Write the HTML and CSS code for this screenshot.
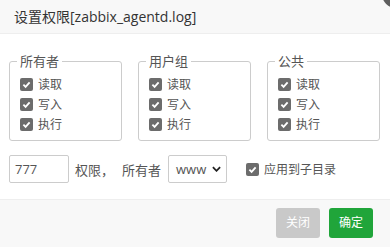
FILE: index.html
```html
<!DOCTYPE html>
<html lang="zh">
<head>
<meta charset="utf-8">
<title>设置权限</title>
<link rel="stylesheet" href="styles.css">
</head>
<body>
<div class="dialog">
  <div class="hd">设置权限[zabbix_agentd.log]</div>
  <span class="close"></span>
  <div class="bd">
    <div class="groups">
      <fieldset class="grp">
        <legend>所有者</legend>
        <label class="row"><span class="cb"><svg viewBox="0 0 12 12"><path d="M2.6 6.2 L5 8.6 L9.4 3.6" /></svg></span>读取</label>
        <label class="row"><span class="cb"><svg viewBox="0 0 12 12"><path d="M2.6 6.2 L5 8.6 L9.4 3.6" /></svg></span>写入</label>
        <label class="row"><span class="cb"><svg viewBox="0 0 12 12"><path d="M2.6 6.2 L5 8.6 L9.4 3.6" /></svg></span>执行</label>
      </fieldset>
      <fieldset class="grp">
        <legend>用户组</legend>
        <label class="row"><span class="cb"><svg viewBox="0 0 12 12"><path d="M2.6 6.2 L5 8.6 L9.4 3.6" /></svg></span>读取</label>
        <label class="row"><span class="cb"><svg viewBox="0 0 12 12"><path d="M2.6 6.2 L5 8.6 L9.4 3.6" /></svg></span>写入</label>
        <label class="row"><span class="cb"><svg viewBox="0 0 12 12"><path d="M2.6 6.2 L5 8.6 L9.4 3.6" /></svg></span>执行</label>
      </fieldset>
      <fieldset class="grp">
        <legend>公共</legend>
        <label class="row"><span class="cb"><svg viewBox="0 0 12 12"><path d="M2.6 6.2 L5 8.6 L9.4 3.6" /></svg></span>读取</label>
        <label class="row"><span class="cb"><svg viewBox="0 0 12 12"><path d="M2.6 6.2 L5 8.6 L9.4 3.6" /></svg></span>写入</label>
        <label class="row"><span class="cb"><svg viewBox="0 0 12 12"><path d="M2.6 6.2 L5 8.6 L9.4 3.6" /></svg></span>执行</label>
      </fieldset>
    </div>
    <div class="opts">
      <div class="inp">777</div>
      <span class="txt t1">权限，</span>
      <span class="txt t2">所有者</span>
      <div class="sel"><span>www</span><svg class="chev" viewBox="0 0 10 6"><path d="M1 1 L5 5 L9 1" /></svg></div>
      <label class="row sub"><span class="cb"><svg viewBox="0 0 12 12"><path d="M2.6 6.2 L5 8.6 L9.4 3.6" /></svg></span>应用到子目录</label>
    </div>
  </div>
  <div class="ft">
    <span class="btn gray">关闭</span>
    <span class="btn green">确定</span>
  </div>
</div>
</body>
</html>
```
FILE: styles.css
```css
* { box-sizing: border-box; }
html, body {
  margin: 0;
  padding: 0;
  width: 390px;
  height: 247px;
  overflow: hidden;
  background: #fff;
  font-family: "Open Sans", "Noto Sans CJK SC", sans-serif;
}
.dialog {
  position: relative;
  width: 390px;
  height: 247px;
  overflow: hidden;
  display: flex;
  flex-direction: column;
}
.hd {
  height: 34px;
  line-height: 33px;
  padding-left: 14px;
  background: #f8f8f8;
  border-bottom: 1px solid #eee;
  font-size: 14px;
  color: #333;
}
.close {
  position: absolute;
  right: -20px;
  top: -20px;
  width: 28px;
  height: 28px;
  border-radius: 50%;
  background: #5f5f5f;
}
.bd {
  flex: 1;
  padding: 18px 10px 0 9px;
}
.groups {
  display: flex;
  gap: 16px;
}
.grp {
  width: 113px;
  margin: 0;
  padding: 4px 0 6px 10px;
  border: 1px solid #ccc;
  border-radius: 3px;
  display: flex;
  flex-direction: column;
}
.grp legend {
  padding: 0 3px;
  margin-left: -3px;
  font-size: 13px;
  line-height: 18px;
  color: #555;
}
.row {
  display: flex;
  align-items: center;
  height: 20px;
  font-size: 12px;
  color: #555;
}
.cb {
  width: 13px;
  height: 13px;
  border-radius: 2px;
  background: #6c6c6c;
  margin-right: 5px;
  display: flex;
  align-items: center;
  justify-content: center;
}
.cb svg {
  width: 11px;
  height: 11px;
  fill: none;
  stroke: #fff;
  stroke-width: 2;
}
.opts {
  display: flex;
  align-items: center;
  margin-top: 14px;
  height: 28px;
}
.inp {
  width: 60px;
  height: 28px;
  border: 1px solid #ccc;
  border-radius: 2px;
  padding-left: 5px;
  line-height: 26px;
  font-size: 13px;
  color: #555;
}
.txt {
  font-size: 13px;
  color: #555;
}
.t1 { margin-left: 6px; }
.t2 { margin-left: 8px; }
.sel {
  margin-left: 7px;
  width: 59px;
  height: 28px;
  border: 1px solid #ccc;
  border-radius: 2px;
  display: flex;
  align-items: center;
  justify-content: space-between;
  padding: 0 5px 0 7px;
  font-size: 13px;
  color: #555;
}
.chev {
  width: 9px;
  height: 6px;
  fill: none;
  stroke: #222;
  stroke-width: 2;
}
.sub {
  margin-left: 19px;
  font-size: 12px;
}
.ft {
  height: 48px;
  background: #f8f8f8;
  border-top: 1px solid #eee;
  display: flex;
  justify-content: flex-end;
  align-items: flex-start;
  gap: 9px;
  padding: 8px 17px 0 0;
}
.btn {
  height: 30px;
  line-height: 30px;
  padding: 0 10px;
  border-radius: 3px;
  font-size: 12px;
  color: #fff;
}
.gray { background: #c9c9c9; }
.green { background: #20a53a; }
```
